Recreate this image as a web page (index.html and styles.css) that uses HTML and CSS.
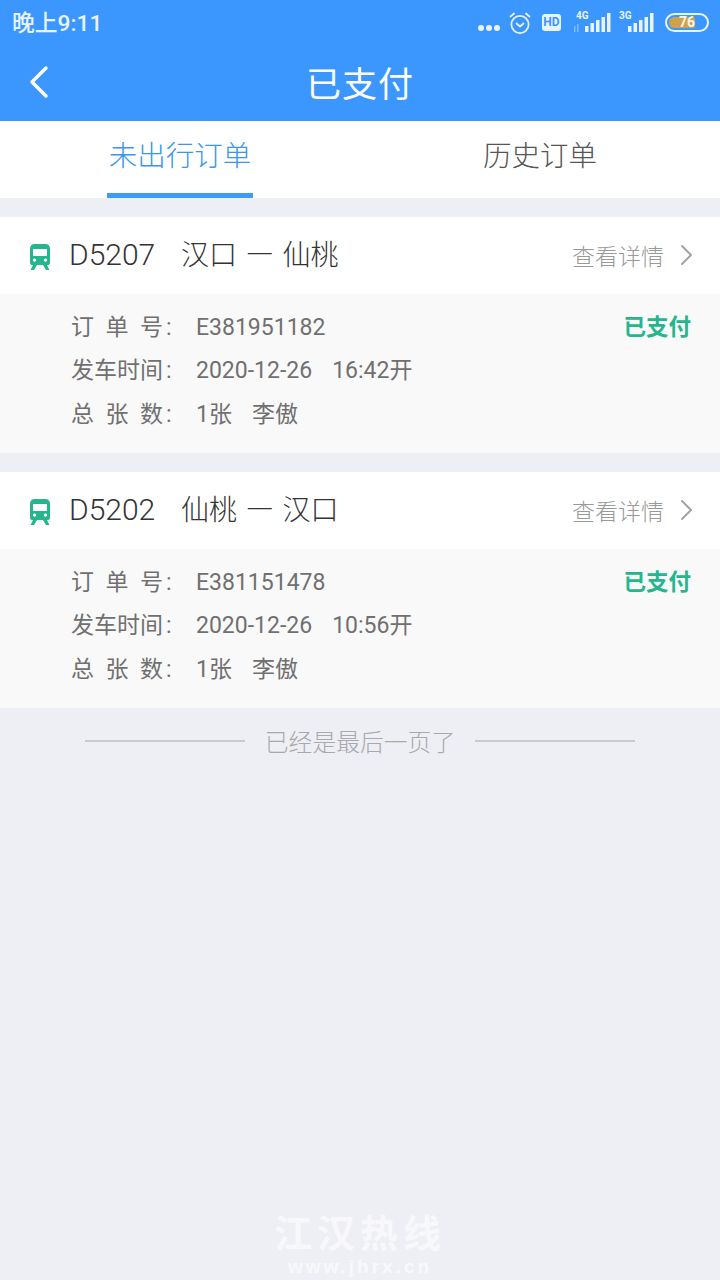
FILE: index.html
```html
<!DOCTYPE html>
<html lang="zh-CN">
<head>
  <meta charset="UTF-8" />
  <meta name="viewport" content="width=device-width, initial-scale=1" />
  <title>已支付</title>
  <link rel="stylesheet" href="styles.css">
</head>
<body>

  <header class="top">
    <!-- Status bar -->
    <div class="status-bar">
      <span class="status-time">晚上9:11</span>
      <div class="status-icons">
        <span class="dots"><i></i><i></i><i></i></span>
        <svg class="alarm" viewBox="0 0 24 24" width="24" height="24" fill="none" stroke="#e8f3ff" stroke-width="1.7" stroke-linecap="round" stroke-linejoin="round">
          <circle cx="12" cy="13.5" r="8.6" />
          <path d="M8.5 12.5 L12 15.5 L15.5 12.5" />
          <path d="M2.5 5.5 L6 2.5 M21.5 5.5 L18 2.5" />
        </svg>
        <span class="hd">HD</span>
        <span class="signal">
          <span class="net">4G</span>
          <svg viewBox="0 0 38 20" width="38" height="20" fill="#e8f3ff">
            <rect x="1" y="13" width="1.5" height="6" opacity=".4" />
            <rect x="4" y="11" width="1.5" height="8" opacity=".4" />
            <rect x="12" y="13" width="3.5" height="6" />
            <rect x="17.5" y="10" width="3.5" height="9" />
            <rect x="23" y="7" width="3.5" height="12" />
            <rect x="28.5" y="4" width="3.5" height="15" />
            <rect x="34" y="0" width="3.5" height="19" />
          </svg>
        </span>
        <span class="signal signal-3g">
          <span class="net">3G</span>
          <svg viewBox="0 0 27 20" width="27" height="20" fill="#e8f3ff">
            <rect x="1" y="13" width="3.5" height="6" />
            <rect x="6.5" y="10" width="3.5" height="9" />
            <rect x="12" y="7" width="3.5" height="12" />
            <rect x="17.5" y="4" width="3.5" height="15" />
            <rect x="23" y="0" width="3.5" height="19" />
          </svg>
        </span>
        <span class="battery"><span class="battery-fill"></span><span class="battery-num">76</span></span>
      </div>
    </div>

    <!-- Title bar -->
    <div class="title-bar">
      <svg class="back" viewBox="0 0 24 34" width="24" height="34" fill="none" stroke="#fff" stroke-width="3.4" stroke-linecap="round" stroke-linejoin="round">
        <path d="M20 3 L6 17 L20 31" />
      </svg>
      <h1>已支付</h1>
    </div>
  </header>

  <nav class="tabs">
    <a class="tab active"><span>未出行订单</span></a>
    <a class="tab"><span>历史订单</span></a>
  </nav>

  <main class="orders">
    <section class="order">
      <div class="order-head">
        <svg class="train" viewBox="0 0 20 26" width="20" height="26" fill="#26b68e">
          <path d="M5 0 H15 Q20 0 20 5 V19 Q20 21 18 21 H2 Q0 21 0 19 V5 Q0 0 5 0 Z M3 5 V12 H17 V5 Z M4.5 14.5 A1.6 1.6 0 1 0 4.51 14.5 Z M15.5 14.5 A1.6 1.6 0 1 0 15.51 14.5 Z" fill-rule="evenodd" />
          <path d="M3 21 H7 L4 26 H0.5 Z M13 21 H17 L19.5 26 H16 Z" />
        </svg>
        <span class="order-route"><span class="train-no">D5207</span><span>汉口 <b class="dash">—</b> 仙桃</span></span>
        <a class="order-link">查看详情
          <svg viewBox="0 0 12 22" width="12" height="22" fill="none" stroke="#a3a3a3" stroke-width="2" stroke-linecap="round" stroke-linejoin="round"><path d="M2 2 L11 11 L2 20" /></svg>
        </a>
      </div>
      <div class="order-body">
        <div class="order-info">
          <div class="info-row"><span class="info-label"><span class="spaced">订单</span>号<span class="colon">:</span></span><span>E381951182</span></div>
          <div class="info-row"><span class="info-label">发车时间<span class="colon">:</span></span><span><span class="gap">2020-12-26</span>16:42开</span></div>
          <div class="info-row"><span class="info-label"><span class="spaced">总张</span>数<span class="colon">:</span></span><span><span class="gap">1张</span>李傲</span></div>
        </div>
        <span class="order-status">已支付</span>
      </div>
    </section>

    <section class="order">
      <div class="order-head">
        <svg class="train" viewBox="0 0 20 26" width="20" height="26" fill="#26b68e">
          <path d="M5 0 H15 Q20 0 20 5 V19 Q20 21 18 21 H2 Q0 21 0 19 V5 Q0 0 5 0 Z M3 5 V12 H17 V5 Z M4.5 14.5 A1.6 1.6 0 1 0 4.51 14.5 Z M15.5 14.5 A1.6 1.6 0 1 0 15.51 14.5 Z" fill-rule="evenodd" />
          <path d="M3 21 H7 L4 26 H0.5 Z M13 21 H17 L19.5 26 H16 Z" />
        </svg>
        <span class="order-route"><span class="train-no">D5202</span><span>仙桃 <b class="dash">—</b> 汉口</span></span>
        <a class="order-link">查看详情
          <svg viewBox="0 0 12 22" width="12" height="22" fill="none" stroke="#a3a3a3" stroke-width="2" stroke-linecap="round" stroke-linejoin="round"><path d="M2 2 L11 11 L2 20" /></svg>
        </a>
      </div>
      <div class="order-body">
        <div class="order-info">
          <div class="info-row"><span class="info-label"><span class="spaced">订单</span>号<span class="colon">:</span></span><span>E381151478</span></div>
          <div class="info-row"><span class="info-label">发车时间<span class="colon">:</span></span><span><span class="gap">2020-12-26</span>10:56开</span></div>
          <div class="info-row"><span class="info-label"><span class="spaced">总张</span>数<span class="colon">:</span></span><span><span class="gap">1张</span>李傲</span></div>
        </div>
        <span class="order-status">已支付</span>
      </div>
    </section>
  </main>

  <div class="end-note"><i></i><span>已经是最后一页了</span><i></i></div>

  <!-- Watermark -->
  <div class="watermark">
    <div class="wm-name">江汉热线</div>
    <div class="wm-url">www.jhrx.cn</div>
  </div>

</body>
</html>
```

FILE: styles.css
```css
* {
  box-sizing: border-box;
}

html, body {
  height: 100%;
}

body {
  margin: 0;
  position: relative;
  overflow: hidden;
  background: #eeeff4;
  color: #333;
  font-family: 'Roboto', 'Noto Sans CJK SC', sans-serif;
}

.top {
  background: #3b97fd;
  height: 121px;
  color: #fff;
}

.status-bar {
  height: 45px;
  display: flex;
  align-items: center;
  justify-content: space-between;
  padding: 0 11px 0 12px;
}

.status-time {
  font-size: 22.8px;
  font-weight: 500;
  color: #e8f3ff;
  padding-bottom: 2px;
}

.status-icons {
  display: flex;
  align-items: center;
}

.dots {
  display: flex;
  gap: 2px;
  margin-top: 11px;
  margin-right: 8px;
}

.dots i {
  width: 6px;
  height: 6px;
  border-radius: 50%;
  background: #e8f3ff;
}

.alarm {
  margin-right: 10px;
}

.hd {
  width: 19px;
  height: 17px;
  border-radius: 3px;
  background: #e8f3ff;
  color: #3b97fd;
  font-size: 12px;
  font-weight: 700;
  line-height: 17px;
  text-align: center;
  margin-right: 12px;
}

.signal {
  position: relative;
  display: block;
  width: 38px;
  height: 24px;
  padding-top: 2px;
  margin-right: 6px;
}

.signal svg {
  display: block;
}

.signal-3g {
  width: 37px;
  padding-left: 10px;
  margin-right: 11px;
}

.net {
  position: absolute;
  left: 3px;
  top: -1px;
  font-size: 10px;
  font-weight: 700;
  line-height: 11px;
  color: #e8f3ff;
}

.signal-3g .net {
  left: 2px;
}

.battery {
  position: relative;
  display: block;
  width: 44px;
  height: 19px;
  border: 2px solid #e8f3ff;
  border-radius: 10px;
  padding: 2px;
}

.battery-fill {
  display: block;
  width: 73%;
  height: 100%;
  border-radius: 6px 2px 2px 6px;
  background: #cfa24a;
}

.battery-num {
  position: absolute;
  left: 0;
  right: 0;
  top: -2px;
  text-align: center;
  font-size: 14px;
  font-weight: 700;
  line-height: 19px;
  color: #fdf6e6;
}

.title-bar {
  height: 76px;
  display: flex;
  align-items: center;
  justify-content: center;
  position: relative;
}

.title-bar h1 {
  margin: 0;
  padding-top: 6px;
  font-size: 35px;
  font-weight: 400;
  line-height: 70px;
  letter-spacing: 1px;
  color: #fff;
}

.back {
  position: absolute;
  left: 26px;
  top: 20px;
}

.tabs {
  display: flex;
  height: 77px;
  background: #fff;
}

.tab {
  flex: 1;
  display: flex;
  justify-content: center;
  font-size: 28.5px;
  font-weight: 300;
  color: #555;
}

.tab span {
  display: block;
  height: 77px;
  line-height: 72px;
}

.tab.active {
  color: #3b97ea;
}

.tab.active span {
  padding: 0 1.5px;
  border-bottom: 5px solid #3d9bf5;
}

.orders {
  display: flex;
  flex-direction: column;
  gap: 19px;
  padding-top: 19px;
}

.order-head {
  height: 76.5px;
  background: #fff;
  display: flex;
  align-items: center;
  padding: 0 28px 0 30px;
}

.train {
  flex-shrink: 0;
  margin-top: 3px;
}

.order-route {
  display: flex;
  align-items: baseline;
  margin-left: 19px;
  margin-bottom: 4px;
  font-family: 'Noto Sans CJK SC', sans-serif;
  font-size: 28px;
  font-weight: 300;
  word-spacing: 2.5px;
  color: #333;
}

.dash {
  font-weight: 500;
}

.train-no {
  width: 112px;
  font-family: 'Roboto', sans-serif;
  font-size: 30px;
}

.order-link {
  margin-left: auto;
  display: flex;
  align-items: center;
  gap: 16px;
  font-size: 23px;
  font-weight: 300;
  color: #999;
}

.order-body {
  height: 159.5px;
  background: #f9f9fa;
  display: flex;
  justify-content: space-between;
  padding: 12px 29px 0 71px;
}

.order-info {
  font-size: 23px;
  color: #707070;
}

.info-row {
  display: flex;
  height: 43.5px;
  line-height: 43.5px;
}

.info-label {
  width: 125px;
  flex-shrink: 0;
}

.spaced {
  letter-spacing: 11.5px;
}

.colon {
  margin-left: 3px;
}

.gap {
  margin-right: 20px;
}

.order-status {
  font-size: 22.5px;
  font-weight: 700;
  color: #26b68e;
  line-height: 43.5px;
}

.end-note {
  display: flex;
  align-items: center;
  justify-content: center;
  gap: 20px;
  height: 66px;
  font-size: 23.8px;
  font-weight: 300;
  color: #a8a8ad;
}

.end-note span {
  padding-bottom: 2px;
}

.end-note i {
  width: 160px;
  height: 2px;
  background: #c9c9ce;
}

.watermark {
  position: absolute;
  left: 0;
  right: 0;
  bottom: 3px;
  text-align: center;
  color: #f8f8fb;
}

.wm-name {
  font-family: 'Liberation Sans', 'Noto Sans CJK SC', sans-serif;
  font-size: 38px;
  font-weight: 700;
  line-height: 40px;
  letter-spacing: 5px;
}

.wm-url {
  font-family: 'Liberation Sans', sans-serif;
  font-size: 19px;
  font-weight: 700;
  line-height: 20px;
  letter-spacing: 3px;
  margin-top: 3px;
}
```
